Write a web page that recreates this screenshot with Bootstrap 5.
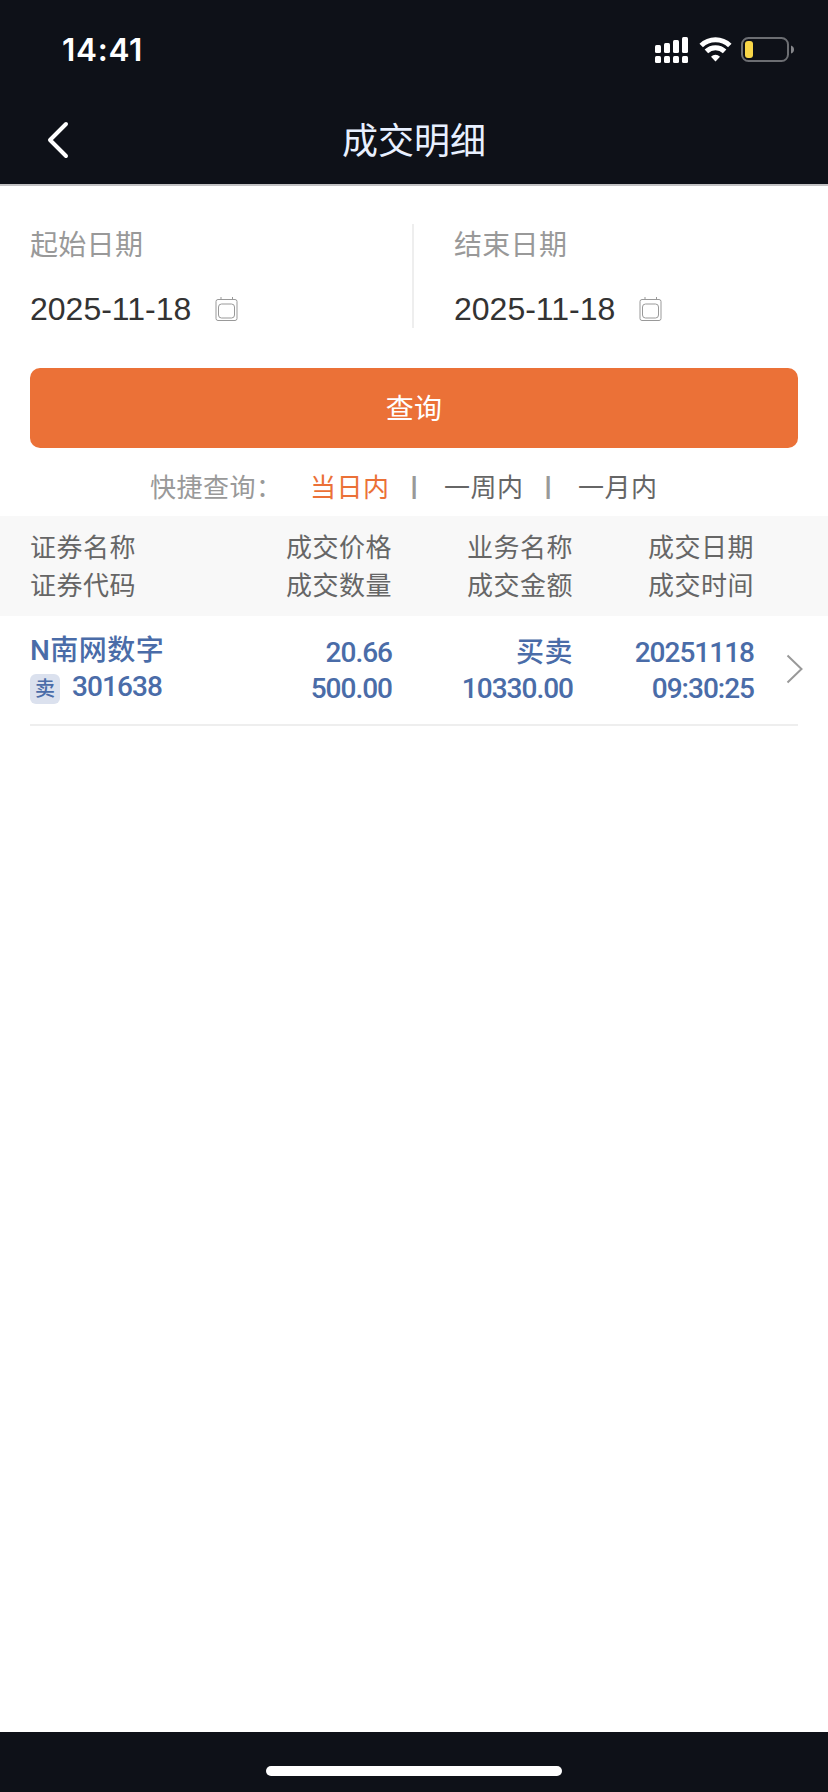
<!DOCTYPE html>
<html lang="zh-CN">
<head>
<meta charset="utf-8">
<meta name="viewport" content="width=device-width, initial-scale=1">
<title>成交明细</title>
<link href="https://cdn.jsdelivr.net/npm/bootstrap@5.3.0/dist/css/bootstrap.min.css" rel="stylesheet">
<style>
body{font-family:"Liberation Sans","Noto Sans CJK SC",sans-serif;background:#fff;color:#333}
svg{display:block}
.dark-bg{background:#0e1118}
.status{height:96px;padding:4px 34px 0 62px}
.clock{font:600 31.5px/1 Inter,sans-serif;color:#fff;letter-spacing:.7px}
.topbar{height:90px;border-bottom:2px solid #c2c2c4}
.back{width:96px;padding-left:46px}
.side{width:96px}
.page-title{font-family:"Noto Sans CJK SC",sans-serif;font-size:36px;line-height:50px;font-weight:400;color:#e8f0ff;padding-bottom:4px}
.dates{padding:38px 30px 0;height:182px}
.date-box{height:104px;padding-top:2px}
.date-box.start{width:382px}
.date-box.end{border-left:2px solid #eee;padding-left:40px}
.date-label{font-size:28px;line-height:40px;color:#999;letter-spacing:.3px}
.date-value{font-size:32px;line-height:40px;margin-top:23px}
.search-btn{height:80px;margin:0 30px;padding:3px 0 0;border-radius:10px;background:#eb7137;color:#fff;font-size:28px;letter-spacing:.3px;border:0}
.quick{height:68px;padding:13px 0 0 150px;font-size:26px;line-height:54px;color:#666;letter-spacing:.5px}
.quick .hint{color:#999;width:160px}
.quick .on{color:#eb7137}
.quick .item{width:79px}
.quick .sep{width:55px;font-size:24px;line-height:50px;font-weight:700;color:#999;letter-spacing:0;padding-right:5px}
.cols{display:grid;grid-template-columns:repeat(4,181px) 1fr;padding-left:30px}
.thead-row{background:#f8f8f8;height:100px;padding-top:13px;font-size:26px;line-height:38px;color:#666;letter-spacing:.5px}
.trade{height:110px;color:#4a6ca8;font:500 28px/36px Roboto,"Noto Sans CJK SC",sans-serif}
.trade .num{padding-top:19px;letter-spacing:-1px}
.trade .stock{padding-top:17px}
.trade .zh{letter-spacing:.5px}
.trade .code{letter-spacing:-.9px}
.side-tag{width:30px;height:30px;border-radius:6px;background:#dbe1ee;font-size:20px;line-height:30px;margin-top:5px}
.rule{height:2px;margin:-2px 30px 0;background:#eee}
.homebar{height:60px;padding-top:34px}
.pill{width:296px;height:10px;border-radius:5px;background:#fff}
</style>
</head>
<body>
<div class="d-flex flex-column vh-100">
  <header class="dark-bg">
    <div class="status d-flex align-items-center justify-content-between">
      <span class="clock">14:41</span>
      <svg width="140" height="30" viewBox="654 35 140 30">
        <g fill="#fff">
          <rect x="655" y="45" width="6" height="8" rx="1.5"/><rect x="664" y="43" width="6" height="10" rx="1.5"/><rect x="673" y="40" width="6" height="13" rx="1.5"/><rect x="682" y="37" width="6" height="16" rx="1.5"/>
          <rect x="655" y="56" width="6" height="7" rx="1.5"/><rect x="664" y="56" width="6" height="7" rx="1.5"/><rect x="673" y="56" width="6" height="7" rx="1.5"/><rect x="682" y="56" width="6" height="7" rx="1.5"/>
          <path d="M715.500 61.500L711 56.700A6.400 6.400 0 0 1 720 56.700Z"/>
        </g>
        <path d="M701.200 45.500A20.500 20.500 0 0 1 729.800 45.500M706.400 51.400A13 13 0 0 1 724.600 51.400" fill="none" stroke="#fff" stroke-width="5"/>
        <rect x="742" y="38" width="46" height="23" rx="6.500" fill="none" stroke="#6c6e72" stroke-width="2"/>
        <rect x="745" y="41" width="8" height="17" rx="3" fill="#f8d648"/>
        <path d="M791 45.500Q794 46.500 794 49.500T791 53.500Z" fill="#85868a"/>
      </svg>
    </div>
    <nav class="topbar d-flex align-items-center">
      <div class="back"><svg width="24" height="40" viewBox="0 0 24 40"><path d="M20 4L4 20L20 36" fill="none" stroke="#fff" stroke-width="4" stroke-linecap="round" stroke-linejoin="round"/></svg></div>
      <div class="page-title flex-grow-1 text-center">成交明细</div>
      <div class="side"></div>
    </nav>
  </header>

  <main class="flex-grow-1">
    <section class="dates">
      <div class="d-flex">
        <div class="date-box start">
          <div class="date-label">起始日期</div>
          <div class="date-value d-flex align-items-center"><span>2025-11-18</span>
            <svg class="ms-4" width="24" height="26" viewBox="0 0 24 26" fill="none" stroke="#999"><path d="M6 1V4M17.500 1V4"/><rect x="1" y="3.500" width="21" height="21" rx="2"/><rect x="3.500" y="8" width="16" height="14" rx="3"/></svg>
          </div>
        </div>
        <div class="date-box end flex-grow-1">
          <div class="date-label">结束日期</div>
          <div class="date-value d-flex align-items-center"><span>2025-11-18</span>
            <svg class="ms-4" width="24" height="26" viewBox="0 0 24 26" fill="none" stroke="#999"><path d="M6 1V4M17.500 1V4"/><rect x="1" y="3.500" width="21" height="21" rx="2"/><rect x="3.500" y="8" width="16" height="14" rx="3"/></svg>
          </div>
        </div>
      </div>
    </section>
    <div class="d-grid"><button class="btn search-btn" type="button">查询</button></div>
    <div class="quick d-flex text-nowrap">
      <span class="hint">快捷查询：</span>
      <span class="item on">当日内</span><span class="sep text-center">|</span>
      <span class="item">一周内</span><span class="sep text-center">|</span>
      <span class="item">一月内</span>
    </div>

    <div class="cols thead-row">
      <div>证券名称<br>证券代码</div>
      <div class="text-end">成交价格<br>成交数量</div>
      <div class="text-end">业务名称<br>成交金额</div>
      <div class="text-end">成交日期<br>成交时间</div>
    </div>
    <div class="cols trade">
      <div class="stock">
        <div class="zh">N南网数字</div>
        <div class="d-flex"><span class="side-tag text-center">卖</span><span class="code ms-2 ps-1">301638</span></div>
      </div>
      <div class="num text-end">20.66<br>500.00</div>
      <div class="num text-end"><span class="zh">买卖</span><br>10330.00</div>
      <div class="num text-end">20251118<br>09:30:25</div>
      <svg class="ms-auto" width="42" height="110" viewBox="786 616 42 110"><path d="M787.500 655.500L801.500 669L787.500 682.500" fill="none" stroke="#999" stroke-width="2"/></svg>
    </div>
    <div class="rule"></div>
  </main>

  <footer class="homebar dark-bg"><div class="pill mx-auto"></div></footer>
</div>
<script src="https://cdn.jsdelivr.net/npm/bootstrap@5.3.0/dist/js/bootstrap.bundle.min.js"></script>
</body>
</html>
